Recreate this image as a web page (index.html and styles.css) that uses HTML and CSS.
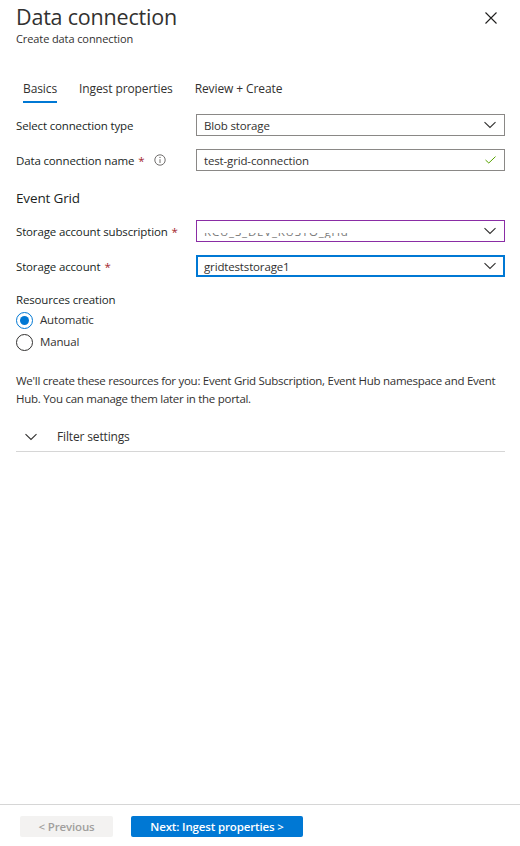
FILE: index.html
```html
<!DOCTYPE html>
<html>
<head>
<meta charset="utf-8">
<link rel="stylesheet" href="styles.css">
</head>
<body>
<div class="blade">
  <header class="head">
    <div class="titles">
      <h1 class="title">Data connection</h1>
      <div class="subtitle">Create data connection</div>
    </div>
    <button class="close" aria-label="Close">
      <svg width="12" height="12" viewBox="0 0 12 12"><path d="M0.5 0.5L11.5 11.5M11.5 0.5L0.5 11.5" stroke="#201f1e" stroke-width="1.1" fill="none"/></svg>
    </button>
  </header>

  <nav class="tabs">
    <div class="tab active">Basics</div>
    <div class="tab">Ingest properties</div>
    <div class="tab">Review + Create</div>
  </nav>

  <main class="content">
    <div class="row">
      <div class="label">Select connection type</div>
      <div class="field">
        <span class="val">Blob storage</span>
        <svg class="chev" width="12" height="8" viewBox="0 0 12 8"><path d="M0.5 1.2L6 6.5L11.5 1.2" stroke="#323130" stroke-width="1.1" fill="none"/></svg>
      </div>
    </div>
    <div class="row">
      <div class="label">Data connection name <span class="req">*</span>
        <svg class="info" width="12" height="12" viewBox="0 0 12 12"><circle cx="6" cy="6" r="5.2" stroke="#605e5c" stroke-width="0.9" fill="none"/><path d="M6 5.2V9" stroke="#605e5c" stroke-width="0.9"/><circle cx="6" cy="3.4" r="0.6" fill="#605e5c"/></svg>
      </div>
      <div class="field">
        <span class="val">test-grid-connection</span>
        <svg class="check" width="11" height="8" viewBox="0 0 11 8"><path d="M0.5 4L3.8 7L10.5 0.6" stroke="#57a300" stroke-width="1" fill="none"/></svg>
      </div>
    </div>

    <h2 class="section">Event Grid</h2>

    <div class="row">
      <div class="label">Storage account subscription <span class="req">*</span></div>
      <div class="field purple">
        <span class="val redacted"><span class="redacted-inner">RCU_S_DEV_KUSTO_grid</span></span>
        <svg class="chev" width="12" height="8" viewBox="0 0 12 8"><path d="M0.5 1.2L6 6.5L11.5 1.2" stroke="#323130" stroke-width="1.1" fill="none"/></svg>
      </div>
    </div>
    <div class="row">
      <div class="label">Storage account <span class="req">*</span></div>
      <div class="field focus">
        <span class="val">gridteststorage1</span>
        <svg class="chev" width="12" height="8" viewBox="0 0 12 8"><path d="M0.5 1.2L6 6.5L11.5 1.2" stroke="#323130" stroke-width="1.1" fill="none"/></svg>
      </div>
    </div>

    <div class="group">
      <div class="group-label">Resources creation</div>
      <label class="radio"><span class="circle on"></span>Automatic</label>
      <label class="radio"><span class="circle"></span>Manual</label>
    </div>

    <p class="note">We'll create these resources for you: Event Grid Subscription, Event Hub namespace and Event Hub. You can manage them later in the portal.</p>

    <div class="expander">
      <svg class="exp-chev" width="12" height="8" viewBox="0 0 12 8"><path d="M0.5 1.2L6 6.5L11.5 1.2" stroke="#323130" stroke-width="1.1" fill="none"/></svg>
      <span>Filter settings</span>
    </div>
  </main>

  <footer class="foot">
    <button class="btn prev">&lt; Previous</button>
    <button class="btn next">Next: Ingest properties &gt;</button>
  </footer>
</div>
</body>
</html>
```

FILE: styles.css
```css
* { box-sizing: border-box; }
html, body { margin: 0; padding: 0; height: 100%; }
body {
  font-family: "Open Sans", "Noto Sans", "Liberation Sans", sans-serif;
  color: #323130;
  background: #fff;
  font-size: 11.5px;
  letter-spacing: -0.15px;
}
.blade {
  height: 846px;
  display: flex;
  flex-direction: column;
}
.head {
  display: flex;
  justify-content: space-between;
  padding: 3px 16px 0 16px;
}
.title {
  margin: 0;
  font-size: 21.5px;
  font-weight: 400;
  line-height: 28px;
  color: #323130;
  letter-spacing: -0.2px;
}
.subtitle {
  font-size: 11px;
  line-height: 14px;
  color: #323130;
  margin-top: 1px;
  letter-spacing: -0.1px;
}
.close {
  border: 0;
  background: none;
  padding: 0;
  margin: 9px 7px 0 0;
  width: 12px;
  height: 12px;
  display: flex;
}
.tabs {
  display: flex;
  gap: 22px;
  padding: 0 23px;
  margin-top: 34px;
}
.tab {
  font-size: 12px;
  line-height: 17px;
  padding-bottom: 4px;
  border-bottom: 2px solid transparent;
  color: #323130;
  letter-spacing: -0.1px;
}
.tab.active { border-bottom-color: #0078d4; }
.content {
  padding: 11px 15px 0 16px;
  flex: 1;
}
.row {
  display: grid;
  grid-template-columns: 180px 1fr;
  align-items: center;
  margin-bottom: 13px;
}
.label {
  font-size: 11.5px;
  font-weight: 500;
  color: #201f1e;
  display: flex;
  align-items: center;
}
.req { color: #a4262c; margin-left: 4px; }
.info { margin-left: 10px; }
.field {
  height: 22px;
  border: 1px solid #8a8886;
  display: flex;
  align-items: center;
  justify-content: space-between;
  padding: 0 7px 0 7px;
  font-size: 11.5px;
  color: #323130;
}
.field.purple { border-color: #8a2da5; }
.field.focus { border: 2px solid #0078d4; padding: 0 6px 0 6px; }
.chev { margin-right: 1px; }
.check { margin-right: 1px; }
.redacted {
  display: inline-block;
  height: 5px;
  overflow: hidden;
  margin-top: 8px;
  color: #777;
  line-height: 12px;
}
.redacted-inner { display: block; margin-top: -7px; letter-spacing: 0.8px; }
.section {
  margin: 18px 0 13px 0;
  font-size: 13.5px;
  font-weight: 500;
  line-height: 18px;
  color: #201f1e;
}
.group { margin-top: 15px; }
.group-label {
  font-size: 11.5px;
  font-weight: 500;
  line-height: 16px;
  margin-bottom: 1px;
  color: #201f1e;
}
.radio {
  display: flex;
  align-items: center;
  font-size: 11.5px;
  line-height: 16px;
  height: 22px;
  gap: 7px;
}
.circle {
  width: 17px;
  height: 17px;
  border: 1px solid #323130;
  border-radius: 50%;
  display: flex;
  align-items: center;
  justify-content: center;
}
.circle.on { border-color: #0078d4; }
.circle.on::after {
  content: "";
  width: 9px;
  height: 9px;
  border-radius: 50%;
  background: #0078d4;
}
.note {
  margin: 19px 0 0 0;
  font-size: 11.5px;
  line-height: 18px;
  color: #323130;
  letter-spacing: -0.28px;
}
.expander {
  display: flex;
  align-items: center;
  margin-top: 14px;
  height: 30px;
  border-bottom: 1px solid #d6d6d6;
  font-size: 12px;
  padding-left: 9px;
  gap: 20px;
}
.foot {
  border-top: 1px solid #d6d6d6;
  display: flex;
  gap: 18px;
  padding: 11px 20px 9px 20px;
}
.btn {
  border: 0;
  border-radius: 2px;
  height: 21px;
  font-family: inherit;
  font-size: 11.5px;
  letter-spacing: -0.15px;
  font-weight: 600;
  padding: 0;
}
.prev { width: 93px; background: #f3f2f1; color: #a19f9d; }
.next { width: 172px; background: #0078d4; color: #fff; }
```
